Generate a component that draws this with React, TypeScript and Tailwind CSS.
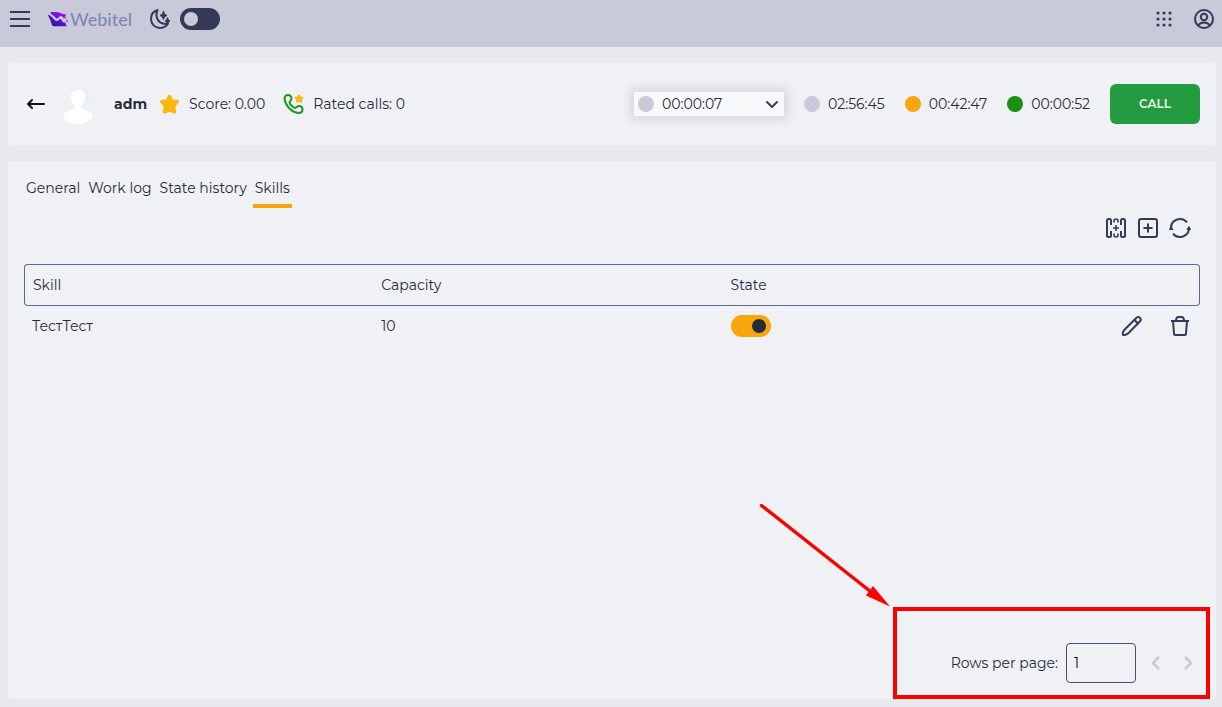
import { useState } from "react";
import type { ReactNode } from "react";

const TABS = ["General", "Work log", "State history", "Skills"];

const TIMERS = [
  { time: "02:56:45", dot: "bg-[#c8cada]" },
  { time: "00:42:47", dot: "bg-[#f9a60c]" },
  { time: "00:00:52", dot: "bg-[#1a9010]" },
];

const SKILLS = [{ id: 1, name: "ТестТест", capacity: 10, enabled: true }];

export default function App() {
  const [dark, setDark] = useState(false);
  const [tab, setTab] = useState("Skills");

  return (
    <div className="flex min-h-screen flex-col bg-[#e8e9ee] font-['Montserrat','Inter',sans-serif] text-[14px] leading-6 text-[#272a3c]">
      <header className="flex h-[47px] items-start bg-[#c8cada] pt-[7px] pr-1.5 pl-2 text-[#343955]">
        <IconButton label="Menu">
          <path d="M2 5h20M2 12h20M2 19h20" strokeWidth="2" />
        </IconButton>
        <a href="#home" className="ml-4 flex h-6 w-[84px] items-center gap-0.5 no-underline">
          <LogoMark />
          <span className="font-['Lato',sans-serif] text-[18px] font-medium text-[#7f89ae]">Webitel</span>
        </a>
        <div className="ml-4 flex h-6 items-center gap-2">
          <svg viewBox="0 0 24 24" className="h-6 w-6" fill="none" stroke="currentColor" strokeLinejoin="round" strokeLinecap="round">
            <path d="M9.500 3C5.500 4.200 3 7.800 3 12c0 5 4 9 9 9 3.300 0 6.200-1.500 8-4.200-6 1-11-2.300-11.500-7.800-.2-2.500.2-4.300 1-6Z" strokeWidth="2" />
            <path d="M15.500 4.500Q16 8 19 8.500 16 9 15.500 12.500 15 9 12 8.500 15 8 15.500 4.500ZM19.500 11Q20 13.500 22 14 20 14.500 19.500 17 19 14.500 17 14 19 13.500 19.500 11Z" fill="currentColor" strokeWidth="1" />
          </svg>
          <Switch label="Dark mode" checked={dark} onChange={setDark} />
        </div>
        <div className="ml-auto flex gap-4">
          <IconButton label="Applications">
            {[6, 12, 18].map((y) =>
              [6, 12, 18].map((x) => (
                <circle key={`${x}-${y}`} cx={x} cy={y} r="1.6" fill="currentColor" stroke="none" />
              )),
            )}
          </IconButton>
          <IconButton label="Account">
            <circle cx="12" cy="12" r="9" strokeWidth="2" />
            <circle cx="12" cy="10" r="3.200" strokeWidth="2" />
            <path d="M6 18.500c1.500-2 3.500-3 6-3s4.500 1 6 3" strokeWidth="2" />
          </IconButton>
        </div>
      </header>

      <main className="flex flex-1 flex-col gap-4 pt-4 pr-1.5 pb-2 pl-2">
        <section className="flex items-center rounded bg-[#f0f1f5] px-4 py-[21px]">
          <button type="button" aria-label="Back" className="text-[#101217]">
            <svg viewBox="0 0 24 24" className="h-6 w-6" fill="none" stroke="currentColor" strokeWidth="2" strokeLinecap="round" strokeLinejoin="round">
              <path d="M20 12H4M8 8l-4 4 4 4" />
            </svg>
          </button>
          <svg viewBox="0 0 40 40" className="mx-[10px] h-10 w-10 rounded-full">
            <circle cx="20" cy="20" r="20" fill="#edf1f4" />
            <path d="M20 6c-4.600 0-7.400 3-7.200 7.800.2 3.600 1.600 6.200 3.500 7.800v3c-2.500 1.800-8 2-10.300 5L5 40h30l-1-10.400c-2.300-3-7.800-3.200-10.300-5v-3c1.900-1.600 3.300-4.200 3.500-7.800C27.400 9 24.600 6 20 6Z" fill="#fff" />
          </svg>
          <h1 className="ml-1.5 font-bold">adm</h1>
          <div className="ml-[10px] flex items-center gap-2">
            <svg viewBox="0 0 24 24" className="h-6 w-6" fill="#fbb70d" stroke="#fbb70d" strokeWidth="3" strokeLinejoin="round">
              <path d="M12.500 4 14.800 8.800 20.500 9.500 16.700 14 17.700 20 12.500 18 7.300 20 8.300 14 4.500 9.500 10.200 8.800Z" />
            </svg>
            <span>Score: 0.00</span>
          </div>
          <div className="ml-4 flex items-center gap-2">
            <svg viewBox="0 0 24 24" className="h-6 w-6" fill="none" strokeLinejoin="round">
              <path d="M3.500 6.500C3.500 4 5.500 3 7 3s3.500 1 3.500 3.500c0 2-2 2.500-2 4s4 5.500 5.500 5.500 2-2 4-2 3.500 1.500 3.500 3.500-1.500 3.500-4 3.500c-7-1-13-7-14-14.500Z" stroke="#1a9a22" strokeWidth="2" />
              <path d="m18 3 1.200 2.200 2.500.4-1.800 1.800.4 2.600-2.300-1.100-2.300 1.100.4-2.600-1.800-1.800 2.500-.4Z" fill="#fbb70d" stroke="#fbb70d" strokeWidth="1.500" />
            </svg>
            <span>Rated calls: 0</span>
          </div>

          <div className="ml-auto flex items-center gap-5">
            <div className="flex h-6 w-[150px] items-center bg-[#f8f9fb] px-1 shadow-[0_0_10px_4px_rgba(0,0,0,0.1)]">
              <span className="h-4 w-4 rounded-full bg-[#c8cada]" />
              <select aria-label="Agent status" className="ml-2 flex-1 appearance-none bg-transparent outline-none">
                <option>00:00:07</option>
              </select>
              <svg viewBox="0 0 16 16" className="pointer-events-none h-4 w-4" fill="none" stroke="#343f62" strokeWidth="2" strokeLinecap="round" strokeLinejoin="round">
                <path d="m3 6 5 5 5-5" />
              </svg>
            </div>
            {TIMERS.map((timer) => (
              <div key={timer.time} className="flex items-center gap-2">
                <span className={`h-4 w-4 rounded-full ${timer.dot}`} />
                <span>{timer.time}</span>
              </div>
            ))}
            <button type="button" className="h-10 w-[90px] rounded-md bg-[#239c40] text-[12px] font-semibold text-[#f0f1f5]">
              CALL
            </button>
          </div>
        </section>

        <section className="relative flex flex-1 flex-col rounded bg-[#f0f1f5] px-4 pt-[15px] pb-4">
          <nav className="flex gap-1" aria-label="Agent sections">
            {TABS.map((name) => (
              <button
                key={name}
                type="button"
                onClick={() => setTab(name)}
                className={`border-b-4 px-0.5 pb-1 ${tab === name ? "border-[#f9a60c]" : "border-transparent"}`}
              >
                {name}
              </button>
            ))}
          </nav>

          <div className="mt-2 flex justify-end gap-2 pr-2 text-[#343955]">
            <IconButton label="Select columns">
              <path d="M7 9V4.500Q7 3 5.500 3h-1Q3 3 3 4.500v15Q3 21 4.500 21h1Q7 21 7 19.500V15M17 9V4.500Q17 3 18.500 3h1Q21 3 21 4.500v15q0 1.500-1.500 1.500h-1Q17 21 17 19.500V15" strokeWidth="2" />
              <path d="M12 9v6M9 12h6M10 6.500V5q0-2 2-2t2 2v1.500M10 17.500V19q0 2 2 2t2-2v-1.500" strokeWidth="1.600" />
            </IconButton>
            <IconButton label="Add skill">
              <rect x="3" y="3" width="18" height="18" rx="2" strokeWidth="2" />
              <path d="M12 7.500v9M7.500 12h9" strokeWidth="2" />
            </IconButton>
            <IconButton label="Refresh">
              <path d="M3 12a9 9 0 0 1 16-5.600M21 12a9 9 0 0 1-16 5.600" strokeWidth="2" />
              <path d="M1.500 13.500 3 10.500l2 3ZM19 13.500 21 10.500l1.500 3Z" fill="currentColor" strokeWidth="1" />
            </IconButton>
          </div>

          <table className="mt-6 w-full table-fixed border-separate border-spacing-0 text-left">
            <colgroup>
              <col className="w-[29.700%]" />
              <col className="w-[29.700%]" />
              <col className="w-[29.700%]" />
              <col />
            </colgroup>
            <thead>
              <tr className="h-[42px]">
                <th className="rounded-l border-y border-l border-[#5a6894] px-2 font-normal">Skill</th>
                <th className="border-y border-[#5a6894] px-2 font-normal">Capacity</th>
                <th className="border-y border-[#5a6894] px-2 font-normal">State</th>
                <th className="rounded-r border-y border-r border-[#5a6894]" aria-label="Actions" />
              </tr>
            </thead>
            <tbody>
              {SKILLS.map((skill) => (
                <SkillRow key={skill.id} skill={skill} />
              ))}
            </tbody>
          </table>

          <footer className="mt-auto flex items-center justify-end gap-2">
            <label htmlFor="rows">Rows per page:</label>
            <input
              id="rows"
              defaultValue="1"
              className="h-10 w-[70px] rounded border border-[#465078] bg-transparent px-[7px] text-black outline-none"
            />
            <div className="flex gap-2 text-[#c8cada]">
              <IconButton label="Previous page">
                <path d="m15 6-6 6 6 6" strokeWidth="2.500" />
              </IconButton>
              <IconButton label="Next page">
                <path d="m9 6 6 6-6 6" strokeWidth="2.500" />
              </IconButton>
            </div>
          </footer>

          {/* Callout around the pagination */}
          <div className="pointer-events-none absolute right-1.5 bottom-0 h-[92px] w-[317px] border-4 border-[#ff0000]" />
          <svg viewBox="0 0 136 108" className="pointer-events-none absolute right-[324px] bottom-[91px] h-[108px] w-[136px]">
            <path d="m5.500 5.500 109 86" stroke="#ff0000" strokeWidth="3.500" strokeLinecap="round" />
            <path d="m117 86-7 9.500L134 106.500Z" fill="#ff0000" />
          </svg>
        </section>
      </main>
    </div>
  );
}

function SkillRow({ skill }: { skill: (typeof SKILLS)[number] }) {
  const [enabled, setEnabled] = useState(skill.enabled);

  return (
    <tr className="h-10">
      <td className="px-2">{skill.name}</td>
      <td className="px-2">{skill.capacity}</td>
      <td className="px-2">
        <Switch label={`${skill.name} state`} checked={enabled} onChange={setEnabled} />
      </td>
      <td className="px-2">
        <div className="flex justify-end gap-6 text-[#343955]">
          <IconButton label="Edit">
            <path d="M3 21c-.5-2 .2-4 1.500-5.300L16 4.200c1.300-1.500 3-1.500 4-.4s1 2.700-.4 4L8.300 19.300C7 20.600 5 21.300 3 21ZM14.500 6l3.500 3.500" strokeWidth="2" />
          </IconButton>
          <IconButton label="Delete">
            <path d="M3 7h18M5 7l1 12.500c0 1 .7 1.500 1.500 1.500h9c.8 0 1.500-.5 1.500-1.500L19 7M8 7c0-2.500 1-4 2.500-4h3C15 3 16 4.500 16 7" strokeWidth="2" />
          </IconButton>
        </div>
      </td>
    </tr>
  );
}

function IconButton({ label, children }: { label: string; children: ReactNode }) {
  return (
    <button type="button" aria-label={label} className="h-6 w-6">
      <svg viewBox="0 0 24 24" className="h-6 w-6" fill="none" stroke="currentColor" strokeLinejoin="round">
        {children}
      </svg>
    </button>
  );
}

function Switch({
  label,
  checked,
  onChange,
}: {
  label: string;
  checked: boolean;
  onChange: (value: boolean) => void;
}) {
  return (
    <input
      type="checkbox"
      role="switch"
      aria-label={label}
      checked={checked}
      onChange={(event) => onChange(event.target.checked)}
      className="flex h-[22px] w-10 appearance-none items-center rounded-full bg-[#343955] px-1 before:h-[14px] before:w-[14px] before:rounded-full before:bg-[#c8cada] before:content-[''] checked:justify-end checked:bg-[#f9a60c] checked:px-[5px] checked:before:bg-[#272a3c]"
    />
  );
}

function LogoMark() {
  return (
    <svg viewBox="0 0 66 48" className="h-4 w-[22px]">
      <defs>
        <linearGradient id="mark" x1="10" y1="48" x2="50" y2="0" gradientUnits="userSpaceOnUse">
          <stop offset="0" stopColor="#1d15a5" />
          <stop offset="0.500" stopColor="#5a14cc" />
          <stop offset="1" stopColor="#b414f0" />
        </linearGradient>
      </defs>
      <g fill="url(#mark)">
        <path d="M10 1h17c9 0 18 8 33 7-1 6-4 10-9 13-3-5-7-8-11-6s-6 7-10 7C24 22 20 12 8 6Z" />
        <path d="M0 10c16 3 19 21 30 21 6 0 7-7 11-7s6 12 13 12c2 0 4-2 5-3-2 4-2 7 4 15H19c-6-2-8-8-9-15C7 27 3 19 0 10Z" />
      </g>
      <circle cx="57" cy="20" r="3" fill="#b414f0" />
      <circle cx="63" cy="30" r="3" fill="#8a14dc" />
    </svg>
  );
}
